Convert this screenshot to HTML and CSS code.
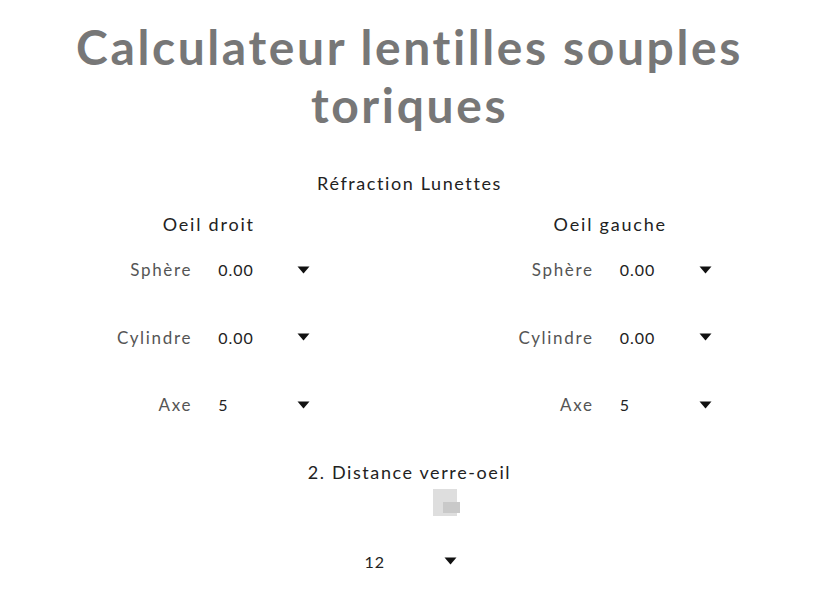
FILE: index.html
```html
<!DOCTYPE html>
<html lang="fr">
<head>
<meta charset="utf-8">
<link rel="stylesheet" href="styles.css">
</head>
<body>
<h1 class="title">Calculateur lentilles souples toriques</h1>
<div class="section-title">Réfraction Lunettes</div>
<div class="eyes">
  <div class="eye">
    <div class="eye-title">Oeil droit</div>
    <div class="row"><span class="label">Sphère</span><span class="select"><span class="val">0.00</span><svg class="arrow" viewBox="0 0 12 8"><path d="M0 0.5 L12 0.5 L6 7.5 Z"/></svg></span></div>
    <div class="row"><span class="label">Cylindre</span><span class="select"><span class="val">0.00</span><svg class="arrow" viewBox="0 0 12 8"><path d="M0 0.5 L12 0.5 L6 7.5 Z"/></svg></span></div>
    <div class="row"><span class="label">Axe</span><span class="select"><span class="val">5</span><svg class="arrow" viewBox="0 0 12 8"><path d="M0 0.5 L12 0.5 L6 7.5 Z"/></svg></span></div>
  </div>
  <div class="eye">
    <div class="eye-title">Oeil gauche</div>
    <div class="row"><span class="label">Sphère</span><span class="select"><span class="val">0.00</span><svg class="arrow" viewBox="0 0 12 8"><path d="M0 0.5 L12 0.5 L6 7.5 Z"/></svg></span></div>
    <div class="row"><span class="label">Cylindre</span><span class="select"><span class="val">0.00</span><svg class="arrow" viewBox="0 0 12 8"><path d="M0 0.5 L12 0.5 L6 7.5 Z"/></svg></span></div>
    <div class="row"><span class="label">Axe</span><span class="select"><span class="val">5</span><svg class="arrow" viewBox="0 0 12 8"><path d="M0 0.5 L12 0.5 L6 7.5 Z"/></svg></span></div>
  </div>
</div>
<div class="section-title distance">2. Distance verre-oeil</div>
<div class="thumb"><span class="thumb-inner"></span></div>
<div class="bottom-row"><span class="select"><span class="val">12</span><svg class="arrow" viewBox="0 0 12 8"><path d="M0 0.5 L12 0.5 L6 7.5 Z"/></svg></span></div>
</body>
</html>
```
FILE: styles.css
```css
body {
  margin: 8px;
  font-family: Lato, "Noto Sans", sans-serif;
  color: #222;
  background: #fff;
}
.title {
  margin: 10px 0 0;
  text-align: center;
  font-size: 48px;
  line-height: 58px;
  font-weight: 700;
  letter-spacing: 2.6px;
  color: #777;
}
.section-title {
  text-align: center;
  font-size: 18px;
  line-height: 22px;
  letter-spacing: 1.6px;
  margin-top: 38px;
  color: #222;
}
.eyes {
  display: flex;
  margin-top: 18px;
}
.eye {
  flex: 1 1 0;
  display: flex;
  flex-direction: column;
  align-items: center;
}
.eye-title {
  font-size: 18px;
  line-height: 24px;
  letter-spacing: 1.8px;
}
.row {
  display: flex;
  align-items: center;
  gap: 21px;
  height: 67.5px;
}
.label {
  width: 88px;
  text-align: right;
  font-size: 17px;
  letter-spacing: 1.7px;
  color: #555;
}
.select {
  width: 100px;
  display: flex;
  align-items: center;
  justify-content: space-between;
  padding: 0 3px 0 5px;
  box-sizing: border-box;
  font-size: 16px;
  letter-spacing: 1px;
  color: #222;
}
.arrow {
  width: 13px;
  height: 8px;
  fill: #111;
}
.distance {
  margin-top: 22px;
}
.thumb {
  width: 24px;
  height: 27px;
  margin: 6px auto 0;
  position: relative;
  left: 35px;
  background: #dedede;
}
.thumb-inner {
  position: absolute;
  right: -3px;
  bottom: 3px;
  width: 17px;
  height: 11px;
  background: #c9c9c9;
}
.bottom-row {
  display: flex;
  justify-content: center;
  margin-top: 36px;
}
```
